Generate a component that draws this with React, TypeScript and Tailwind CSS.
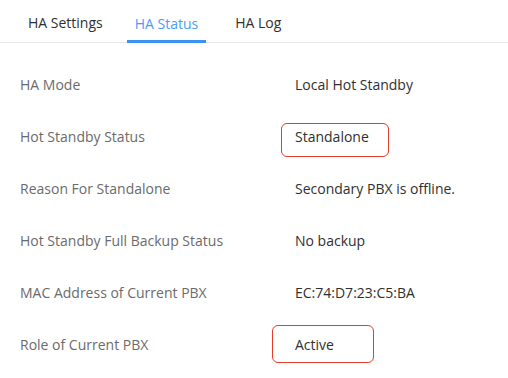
import React from 'react';

const rows = [
  { label: 'HA Mode', value: 'Local Hot Standby' },
  { label: 'Hot Standby Status', value: 'Standalone' },
  { label: 'Reason For Standalone', value: 'Secondary PBX is offline.' },
  { label: 'Hot Standby Full Backup Status', value: 'No backup' },
  { label: 'MAC Address of Current PBX', value: 'EC:74:D7:23:C5:BA' },
  { label: 'Role of Current PBX', value: 'Active' },
];

export default function App() {
  return (
    <div className="relative w-[508px] h-[378px] bg-white overflow-hidden" style={{ fontFamily: '"Open Sans", "Noto Sans", sans-serif' }}>
      {/* Tabs */}
      <div className="flex items-end h-[43px] border-b border-[#e8e8e8] pl-[20px]">
        <div className="px-2 h-[42px] flex items-center text-[14px] text-[#303030] pt-[3px]">HA Settings</div>
        <div className="ml-[16px] px-2 h-[42px] flex items-center text-[14px] text-[#4a9cf7] border-b-[3px] border-[#3a92f4] -mb-px pt-[5px]">
          HA Status
        </div>
        <div className="ml-[21px] px-2 h-[42px] flex items-center text-[14px] text-[#303030] pt-[3px]">HA Log</div>
      </div>

      {/* Rows */}
      <div className="flex flex-col pt-[15px]">
        {rows.map((r) => (
          <div key={r.label} className="flex items-center h-[52px] text-[14px]">
            <div className="w-[295px] pl-[20px] text-[#6b6b6b]">{r.label}</div>
            <div className="text-[#303030]">{r.value}</div>
          </div>
        ))}
      </div>

      {/* Annotation boxes */}
      <div className="absolute left-[281px] top-[123px] w-[108px] h-[34px] border border-[#e43d2a] rounded-[6px]" />
      <div className="absolute left-[272px] top-[325px] w-[102px] h-[38px] border border-[#e43d2a] rounded-[6px]" />
    </div>
  );
}
